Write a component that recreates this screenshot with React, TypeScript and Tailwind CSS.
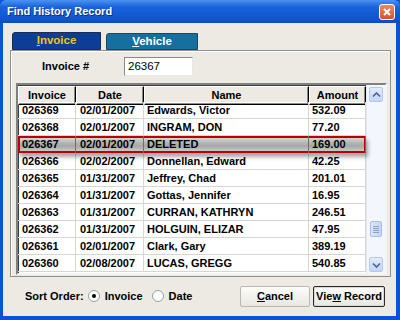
import React from "react";

const rows = [
  ["026369", "02/01/2007", "Edwards, Victor", "532.09"],
  ["026368", "02/01/2007", "INGRAM, DON", "77.20"],
  ["026367", "02/01/2007", "DELETED", "169.00"],
  ["026366", "02/02/2007", "Donnellan, Edward", "42.25"],
  ["026365", "01/31/2007", "Jeffrey, Chad", "201.01"],
  ["026364", "01/31/2007", "Gottas, Jennifer", "16.95"],
  ["026363", "01/31/2007", "CURRAN, KATHRYN", "246.51"],
  ["026362", "01/31/2007", "HOLGUIN, ELIZAR", "47.95"],
  ["026361", "02/01/2007", "Clark, Gary", "389.19"],
  ["026360", "02/08/2007", "LUCAS, GREGG", "540.85"],
];

const cols = "grid grid-cols-[58px_68px_165px_57px]";

const Chevron = ({ down }: { down?: boolean }) => (
  <svg width="9" height="6" viewBox="0 0 9 6">
    <path
      d={down ? "M1 1.5 L4.5 5 L8 1.5" : "M1 4.5 L4.5 1 L8 4.5"}
      fill="none"
      stroke="#4d6185"
      strokeWidth="1.6"
    />
  </svg>
);

const Radio = ({ checked }: { checked?: boolean }) => (
  <span className="w-[12px] h-[12px] rounded-full border border-[#9aa0a8] bg-white flex items-center justify-center">
    {checked && <span className="w-[4px] h-[4px] rounded-full bg-black" />}
  </span>
);

export default function App() {
  return (
    <div className="w-[400px] h-[320px] flex flex-col bg-[#0b52d8] px-[3px] pb-[4px] pr-[4px] font-['Liberation_Sans',Arial,sans-serif] text-[11px] font-bold text-black overflow-hidden">
      {/* title bar */}
      <div className="h-[23px] -mx-[3px] -mr-[4px] px-[7px] flex items-center justify-between bg-[linear-gradient(to_bottom,#4a93f2,#1a63dc_30%,#0f56d2_80%,#0a4cc4)] rounded-t-[6px]">
        <span className="text-white text-[11px] font-bold [text-shadow:1px_1px_0_#0a2f80]">Find History Record</span>
        <span className="w-[16px] h-[16px] mt-[1px] -mr-[2px] rounded-[3px] border border-white bg-[linear-gradient(to_bottom,#ec8a64,#d9512b)] flex items-center justify-center">
          <svg width="10" height="10" viewBox="0 0 10 10">
            <path d="M2 2 L8 8 M8 2 L2 8" stroke="white" strokeWidth="2" />
          </svg>
        </span>
      </div>

      {/* body */}
      <div className="flex-1 bg-[#eceae3] flex flex-col px-[7px] pt-[9px]">
        {/* tabs */}
        <div className="flex items-end gap-[5px] pl-[2px] h-[18px]">
          <div className="w-[89px] h-[18px] bg-[#0b3e94] rounded-tl-[3px] border border-[#1a2a5a] flex items-center justify-center text-[#f1c21a] text-[11.5px]">
            <span><span className="underline">I</span>nvoice</span>
          </div>
          <div className="w-[92px] h-[17px] bg-[#15709f] rounded-tl-[3px] border border-[#1e4660] flex items-center justify-center text-white text-[11.5px]">
            <span><span className="underline">V</span>ehicle</span>
          </div>
        </div>

        {/* panel */}
        <div className="w-[381px] h-[227px] border border-[#8f9090] shadow-[inset_1px_1px_0_#ffffff] flex flex-col pt-[6px] pl-[5px]">
          <div className="flex items-center h-[19px] pl-[26px]">
            <span className="w-[82px]">Invoice #</span>
            <div className="w-[69px] h-[19px] bg-white border border-t-[#8a8a8a] border-l-[#8a8a8a] border-r-[#e8e8e8] border-b-[#e8e8e8] flex items-center pl-[3px] font-normal text-[11.5px]">
              26367
            </div>
          </div>

          {/* table */}
          <div className="mt-[7px] w-[371px] h-[192px] border-2 border-t-[#808080] border-l-[#808080] border-r-[#f4f4f4] border-b-[#f4f4f4] shadow-[inset_1px_1px_0_#404040] bg-white flex">
            <div className="flex flex-col pt-[1px] pl-[0px]">
              <div className={`${cols} h-[16px] bg-[#eceae3]`}>
                {["Invoice", "Date", "Name", "Amount"].map((h) => (
                  <div
                    key={h}
                    className="flex items-center justify-center border-t border-l border-t-white border-l-white border-r border-b border-r-black border-b-black shadow-[inset_-1px_-1px_0_#8a8a8a]"
                  >
                    {h}
                  </div>
                ))}
              </div>
              {rows.map((r) => {
                const sel = r[2] === "DELETED";
                return (
                  <div
                    key={r[0]}
                    className={
                      sel
                        ? `${cols} h-[17px] relative z-10 bg-[linear-gradient(to_bottom,#e2e2e2,#b0b0b0_45%,#a8a8a8_60%,#d6d6d6)] shadow-[inset_0_0_0_2px_#b80000,2px_4px_4px_rgba(0,0,0,0.35)]`
                        : `${cols} h-[17px]`
                    }
                  >
                    {r.map((c, i) => (
                      <div
                        key={i}
                        className={
                          (sel
                            ? "border-r border-r-[#6e6e6e] "
                            : "border-r border-b border-[#d8d6d0] ") +
                          (i < 2 ? "pl-[4px] " : "pl-[3px] ") +
                          "flex items-center whitespace-nowrap overflow-hidden"
                        }
                      >
                        {c}
                      </div>
                    ))}
                  </div>
                );
              })}
            </div>

            {/* scrollbar */}
            <div className="w-[19px] bg-[#f3f6fd] border-l border-[#e2e8f6] flex flex-col items-center pt-[2px] pb-[1px]">
              <div className="w-[14px] h-[15px] rounded-[2px] bg-[linear-gradient(to_bottom,#e3ebfd,#c3d4fb)] border border-[#b5c8f2] flex items-center justify-center">
                <Chevron />
              </div>
              <div className="flex-1 flex flex-col justify-end pb-[20px]">
                <div className="w-[12px] h-[16px] rounded-[2px] bg-[linear-gradient(to_right,#dbe6fd,#c6d6fb)] border border-[#a9bdea] flex flex-col items-center justify-center gap-[1px]">
                  <span className="w-[6px] h-px bg-[#8aa0cc]" />
                  <span className="w-[6px] h-px bg-[#8aa0cc]" />
                  <span className="w-[6px] h-px bg-[#8aa0cc]" />
                  <span className="w-[6px] h-px bg-[#8aa0cc]" />
                </div>
              </div>
              <div className="w-[14px] h-[15px] rounded-[2px] bg-[linear-gradient(to_bottom,#e3ebfd,#c3d4fb)] border border-[#b5c8f2] flex items-center justify-center">
                <Chevron down />
              </div>
            </div>
          </div>
        </div>

        {/* bottom row */}
        <div className="flex-1 flex items-center justify-between pl-[15px] pr-[4px] pb-[1px]">
          <div className="flex items-center">
            <span className="mr-[4px]">Sort Order:</span>
            <Radio checked />
            <span className="ml-[5px] mr-[9px]">Invoice</span>
            <Radio />
            <span className="ml-[5px]">Date</span>
          </div>
          <div className="flex items-center gap-[3px]">
            <div className="w-[70px] h-[21px] rounded-[2px] border border-[#b9b9b4] bg-[linear-gradient(to_bottom,#fdfdfb,#e8e7e0)] flex items-center justify-center">
              <span><span className="underline">C</span>ancel</span>
            </div>
            <div className="w-[72px] h-[21px] rounded-[2px] border border-[#2a2a2a] bg-[linear-gradient(to_bottom,#fdfdfb,#e8e7e0)] shadow-[inset_0_0_0_1px_#d8d8d8] flex items-center justify-center">
              <span>Vie<span className="underline">w</span> Record</span>
            </div>
          </div>
        </div>
      </div>
    </div>
  );
}
